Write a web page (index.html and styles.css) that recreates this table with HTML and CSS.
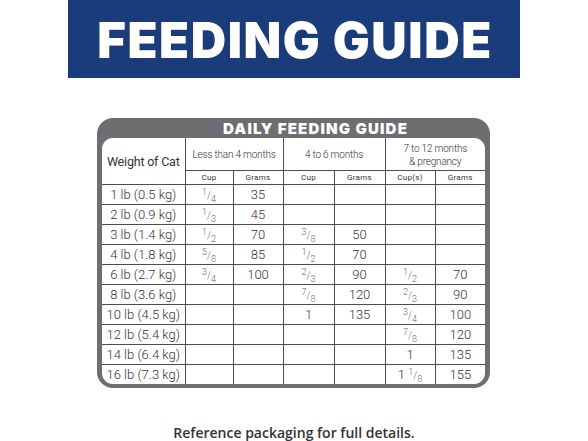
FILE: index.html
```
<!DOCTYPE html>
<html lang="en">
<head>
  <meta charset="UTF-8">
  <meta name="viewport" content="width=device-width, initial-scale=1.0">
  <title>Feeding Guide</title>
  <link rel="stylesheet" href="styles.css">
</head>
<body>

<!-- Banner -->
<div class="banner">
  <h1 class="banner-title">FEEDING GUIDE</h1>
</div>

<!-- Feeding table card -->
<div class="guide-card">
  <div class="guide-title">DAILY FEEDING GUIDE</div>
  <div class="guide-body">
    <table class="guide-table">
      <colgroup>
        <col style="width:83px"><col style="width:48px"><col style="width:50px">
        <col style="width:51px"><col style="width:51px"><col style="width:50px"><col style="width:50px">
      </colgroup>
      <tr class="group-row">
        <td rowspan="2" class="weight-head">Weight of Cat</td>
        <td colspan="2">Less than 4 months</td>
        <td colspan="2">4 to 6 months</td>
        <td colspan="2" class="two-line">7 to 12 months<br>&amp; pregnancy</td>
      </tr>
      <tr class="unit-row">
        <td>Cup</td><td>Grams</td><td>Cup</td><td>Grams</td><td>Cup(s)</td><td>Grams</td>
      </tr>
      <tr><td>1 lb (0.5 kg)</td><td><span class="frac"><sup>1</sup>/<sub>4</sub></span></td><td>35</td><td></td><td></td><td></td><td></td></tr>
      <tr><td>2 lb (0.9 kg)</td><td><span class="frac"><sup>1</sup>/<sub>3</sub></span></td><td>45</td><td></td><td></td><td></td><td></td></tr>
      <tr><td>3 lb (1.4 kg)</td><td><span class="frac"><sup>1</sup>/<sub>2</sub></span></td><td>70</td><td><span class="frac"><sup>3</sup>/<sub>8</sub></span></td><td>50</td><td></td><td></td></tr>
      <tr><td>4 lb (1.8 kg)</td><td><span class="frac"><sup>5</sup>/<sub>8</sub></span></td><td>85</td><td><span class="frac"><sup>1</sup>/<sub>2</sub></span></td><td>70</td><td></td><td></td></tr>
      <tr><td>6 lb (2.7 kg)</td><td><span class="frac"><sup>3</sup>/<sub>4</sub></span></td><td>100</td><td><span class="frac"><sup>2</sup>/<sub>3</sub></span></td><td>90</td><td><span class="frac"><sup>1</sup>/<sub>2</sub></span></td><td>70</td></tr>
      <tr><td>8 lb (3.6 kg)</td><td></td><td></td><td><span class="frac"><sup>7</sup>/<sub>8</sub></span></td><td>120</td><td><span class="frac"><sup>2</sup>/<sub>3</sub></span></td><td>90</td></tr>
      <tr><td>10 lb (4.5 kg)</td><td></td><td></td><td>1</td><td>135</td><td><span class="frac"><sup>3</sup>/<sub>4</sub></span></td><td>100</td></tr>
      <tr><td>12 lb (5.4 kg)</td><td></td><td></td><td></td><td></td><td><span class="frac"><sup>7</sup>/<sub>8</sub></span></td><td>120</td></tr>
      <tr><td>14 lb (6.4 kg)</td><td></td><td></td><td></td><td></td><td>1</td><td>135</td></tr>
      <tr><td>16 lb (7.3 kg)</td><td></td><td></td><td></td><td></td><td>1 <span class="frac"><sup>1</sup>/<sub>8</sub></span></td><td>155</td></tr>
    </table>
  </div>
</div>

<p class="note">Reference packaging for full details.</p>

</body>
</html>
```
FILE: styles.css
```
/* Page */
body {
  margin: 0;
  background-color: #fff;
  font-family: "Roboto", "Liberation Sans", sans-serif;
  color: #333;
}

/* Blue banner */
.banner {
  margin-left: 68px;
  width: 452px;
  height: 78px;
  background-color: #1b3c7b;
  display: flex;
  align-items: center;
  justify-content: center;
}

.banner-title {
  margin: 0 -2px 0 0;
  padding-top: 2px;
  font-family: "Inter", "DejaVu Sans", sans-serif;
  font-weight: 900;
  font-size: 49px;
  letter-spacing: 1.6px;
  color: #fff;
}

/* Card with the table */
.guide-card {
  margin: 40px 0 0 97px;
  width: 393px;
  box-sizing: border-box;
  padding: 0 5px 4px 5px;
  background-color: #6d6e71;
  border-radius: 16px;
}

.guide-title {
  height: 20px;
  line-height: 21px;
  padding-left: 121px;
  font-family: "Inter", "DejaVu Sans", sans-serif;
  font-weight: 900;
  font-size: 15px;
  letter-spacing: 1.2px;
  color: #fff;
}

.guide-body {
  background-color: #fff;
  border-radius: 11px;
  overflow: hidden;
}

.guide-table {
  width: 383px;
  border-collapse: collapse;
  table-layout: fixed;
}

.guide-table td {
  height: 19px;
  padding: 0;
  border-right: 1px solid #4d4d4f;
  border-bottom: 1px solid #4d4d4f;
  text-align: center;
  font-size: 13px;
  font-weight: 300;
  color: #333;
  white-space: nowrap;
}

.guide-table td:last-child {
  border-right: none;
}

.guide-table tr:last-child td {
  border-bottom: none;
}

.guide-table .weight-head:first-child {
  border-right: 1px solid #4d4d4f;
}

/* Header rows */
.group-row td {
  height: 31px;
  font-size: 10px;
  letter-spacing: -0.2px;
}

.group-row .weight-head {
  font-size: 12.5px;
  font-weight: 400;
  letter-spacing: -0.2px;
}

.group-row .two-line {
  line-height: 13px;
  padding-top: 1px;
}

.unit-row td {
  height: 13px;
  font-size: 8px;
  font-weight: 400;
  letter-spacing: 0.3px;
}

/* Fractions */
.frac {
  font-size: 10px;
  color: #666;
}

.frac sup,
.frac sub {
  font-size: 9px;
  line-height: 0;
}

/* Footer note */
.note {
  margin: 35px 0 0 0;
  text-align: center;
  font-family: "Open Sans", sans-serif;
  font-weight: 600;
  font-size: 14px;
  color: #333;
}
```
